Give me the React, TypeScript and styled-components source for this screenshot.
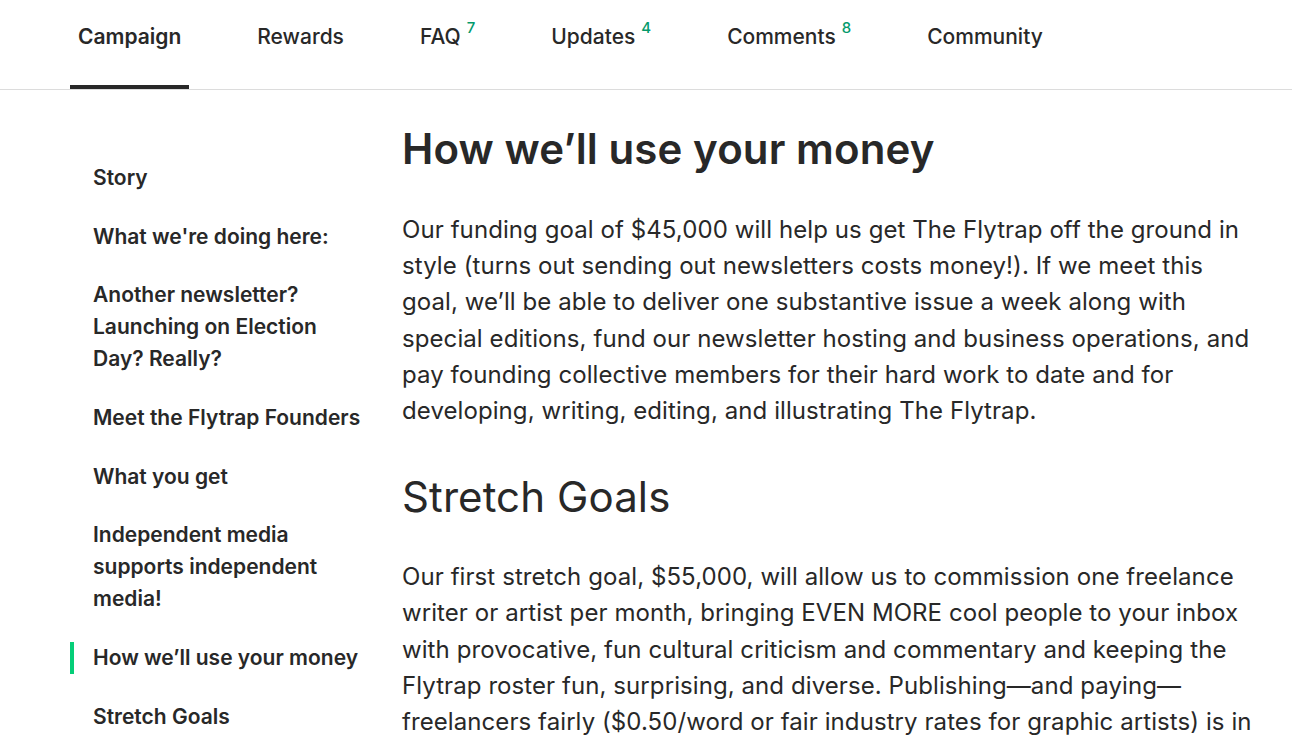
import styled, { createGlobalStyle } from 'styled-components';

const GlobalStyle = createGlobalStyle`
	body {
		margin: 0;
		background: #fff;
		color: #282828;
		font-family: Inter, 'Noto Sans', sans-serif;
	}
`;

const Page = styled.div`
	width: 1292px;
	height: 746px;
	overflow: hidden;
`;

const TabBar = styled.nav`
	height: 90px;
	border-bottom: 1px solid #dcdcdc;
	box-sizing: border-box;
	display: flex;
	gap: 60px;
	padding-left: 70px;
`;

const Tab = styled.a<{ $active?: boolean }>`
	display: flex;
	align-items: flex-start;
	padding: 23px 8px 0;
	height: 89px;
	box-sizing: border-box;
	font-size: 21px;
	line-height: 27px;
	font-weight: ${(p) => (p.$active ? 600 : 500)};
	color: #282828;
	border-bottom: 4px solid ${(p) => (p.$active ? '#282828' : 'transparent')};
	cursor: pointer;
`;

const Count = styled.sup`
	font-size: 15px;
	line-height: 1;
	color: #049a6b;
	margin-left: 6px;
	position: relative;
	top: -3px;
	vertical-align: top;
`;

const Body = styled.div`
	display: flex;
	padding-left: 70px;
`;

const Sidebar = styled.ul`
	list-style: none;
	margin: 0;
	padding: 72px 0 0;
	width: 332px;
	flex-shrink: 0;
	display: flex;
	flex-direction: column;
	gap: 26.7px;
`;

const NavItem = styled.li<{ $current?: boolean }>`
	padding-left: 19px;
	border-left: 4px solid ${(p) => (p.$current ? '#05ce78' : 'transparent')};
	font-size: 21px;
	line-height: 32px;
	font-weight: 600;
	width: 275px;
`;

const Main = styled.main`
	width: 856px;
	padding-top: 34px;
`;

const Heading = styled.h2<{ $light?: boolean; $gap?: number }>`
	margin: ${(p) => p.$gap ?? 0}px 0 0;
	font-size: 42px;
	line-height: 50px;
	font-weight: ${(p) => (p.$light ? 400 : 600)};
	letter-spacing: 0.1px;
`;

const Para = styled.p<{ $gap: number }>`
	margin: ${(p) => p.$gap}px 0 0;
	font-size: 24px;
	line-height: 36.2px;
	font-weight: 400;
	letter-spacing: 0.08px;
`;

const tabs = [
	{ label: 'Campaign', active: true },
	{ label: 'Rewards' },
	{ label: 'FAQ', count: 7 },
	{ label: 'Updates', count: 4 },
	{ label: 'Comments', count: 8 },
	{ label: 'Community' },
];

const sections = [
	'Story',
	"What we're doing here:",
	'Another newsletter? Launching on Election Day? Really?',
	'Meet the Flytrap Founders',
	'What you get',
	'Independent media supports independent media!',
	'How we’ll use your money',
	'Stretch Goals',
];

function App() {
	return (
		<Page>
			<GlobalStyle />
			<TabBar>
				{tabs.map((t) => (
					<Tab key={t.label} $active={t.active}>
						{t.label}
						{t.count && <Count>{t.count}</Count>}
					</Tab>
				))}
			</TabBar>
			<Body>
				<Sidebar>
					{sections.map((s) => (
						<NavItem key={s} $current={s === 'How we’ll use your money'}>
							{s}
						</NavItem>
					))}
				</Sidebar>
				<Main>
					<Heading>How we’ll use your money</Heading>
					<Para $gap={38}>
						Our funding goal of $45,000 will help us get The Flytrap off the ground in style (turns
						out sending out newsletters costs money!). If we meet this goal, we’ll be able to
						deliver one substantive issue a week along with special editions, fund our newsletter
						hosting and business operations, and pay founding collective members for their hard
						work to date and for developing, writing, editing, and illustrating The Flytrap.
					</Para>
					<Heading $light $gap={43}>
						Stretch Goals
					</Heading>
					<Para $gap={37}>
						Our first stretch goal, $55,000, will allow us to commission one freelance writer or
						artist per month, bringing EVEN MORE cool people to your inbox with provocative, fun
						cultural criticism and commentary and keeping the Flytrap roster fun, surprising, and
						diverse. Publishing—and paying—freelancers fairly ($0.50/word or fair industry rates
						for graphic artists) is in keeping with our values.
					</Para>
				</Main>
			</Body>
		</Page>
	);
}

export default App;
